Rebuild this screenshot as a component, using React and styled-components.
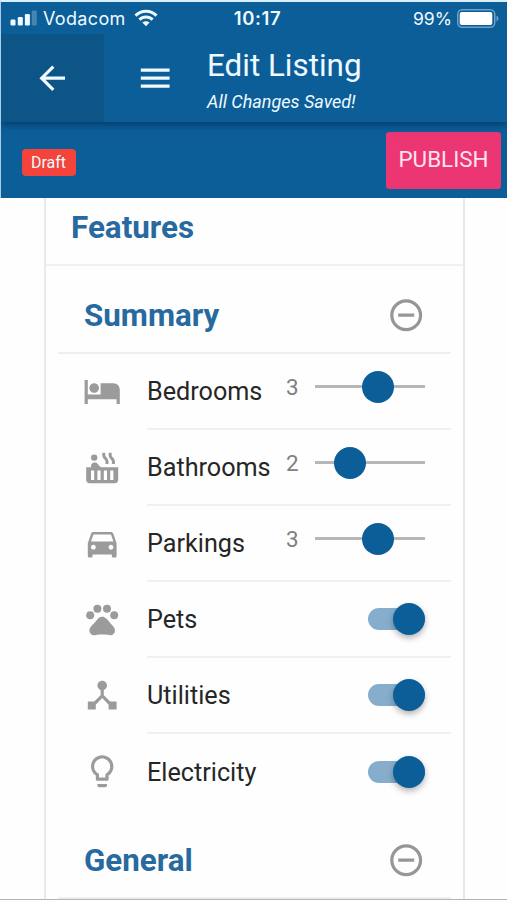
import React from "react";
import styled, { createGlobalStyle } from "styled-components";
import {
  MdArrowBack,
  MdMenu,
  MdHotel,
  MdHotTub,
  MdDirectionsCar,
  MdPets,
  MdDeviceHub,
  MdLightbulbOutline,
  MdRemoveCircleOutline,
} from "react-icons/md";

const GlobalStyle = createGlobalStyle`
  *, *::before, *::after { box-sizing: border-box; }
  html, body { margin: 0; height: 900px; overflow: hidden; background: #fefefe; }
  body { font-family: Roboto, "Liberation Sans", sans-serif; }
`;

const Screen = styled.div`
  display: flex;
  flex-direction: column;
  width: 507px;
  height: 900px;
  overflow: hidden;
  border-bottom: 1px solid #b4b4b4;
  color: #262626;
`;

const Header = styled.header`
  flex: none;
  height: 198px;
  border-top: 2px solid #d9effa;
  border-left: 1px solid #a9cde6;
  background: #0c5e99;
  color: #eefaff;
`;

const StatusBar = styled.div`
  display: grid;
  grid-template-columns: 1fr auto 1fr;
  align-items: center;
  height: 32px;
  padding: 0 8px 0 9px;
  font-family: Inter, "Liberation Sans", sans-serif;
`;

const StatusGroup = styled.div`
  display: flex;
  align-items: center;
  justify-content: ${(p) => (p.$end ? "flex-end" : "flex-start")};
`;

const Carrier = styled.span`
  margin: 0 8px 0 6px;
  font-size: 18px;
  letter-spacing: 0.35px;
`;

const Clock = styled.span`
  padding-left: 6px;
  font-weight: 600;
  font-size: 18.5px;
  letter-spacing: 0.6px;
`;

const Charge = styled.span`
  margin-right: 5px;
  font-size: 17.6px;
`;

const AppBar = styled.div`
  position: relative;
  display: flex;
  height: 88px;
  box-shadow: 0 2px 8px rgba(0, 25, 60, 0.6);
  clip-path: inset(0 0 -12px 0);
`;

const BackButton = styled.button`
  display: flex;
  align-items: center;
  justify-content: center;
  width: 103px;
  padding: 0;
  border: 0;
  background: #0d5487;
  color: inherit;
  font-size: 38.4px;
`;

const MenuButton = styled(BackButton)`
  width: 103px;
  background: none;
`;

const Titles = styled.div`
  padding-top: 12px;
  white-space: nowrap;
`;

const Title = styled.h1`
  margin: 0;
  font-size: 31.4px;
  font-weight: 400;
  line-height: 40px;
`;

const SaveState = styled.div`
  margin-top: 5px;
  font-size: 18px;
  font-style: italic;
  line-height: 22px;
`;

const ActionBar = styled.div`
  display: flex;
  align-items: center;
  justify-content: space-between;
  height: 76px;
  padding: 0 6px 0 20.5px;
`;

const Tag = styled.span`
  display: flex;
  align-items: center;
  justify-content: center;
  width: 54px;
  height: 27px;
  margin-top: 4px;
  border-radius: 4px;
  background: #f4433b;
  font-size: 16px;
`;

const Publish = styled.button`
  width: 115px;
  height: 57px;
  padding: 0 0 2px;
  border: 0;
  border-radius: 3px;
  background: #ec3573;
  color: #ffe2ee;
  font: 400 22.4px Roboto, sans-serif;
`;

const Card = styled.main`
  flex: 1;
  min-height: 0;
  margin: 0 42px 0 44px;
  overflow: hidden;
  border: solid #e9e9e9;
  border-width: 0 2px;
`;

const CardTitle = styled.h2`
  height: 68px;
  margin: 0;
  padding: 10px 0 0 25px;
  border-bottom: 2px solid #f0f0f0;
  color: #2869a0;
  font-size: 31.4px;
  font-weight: 700;
  line-height: 40px;
`;

const SectionHeader = styled.div`
  display: flex;
  align-items: center;
  justify-content: space-between;
  height: 88px;
  margin: 0 12px;
  padding: 14px 26px 0 26px;
  border-bottom: 2px solid #efefef;
  color: #969696;
  font-size: 38.4px;

  svg { margin-bottom: 1px; }
`;

const SectionTitle = styled.h3`
  margin: 0;
  color: #2869a0;
  font-size: 31.3px;
  font-weight: 700;
  line-height: 40px;
`;

const Row = styled.div`
  display: flex;
  height: ${(p) => (p.$last ? 77 : 76)}px;
  padding: 0 12px 0 37px;
`;

const RowIcon = styled.div`
  display: flex;
  align-items: center;
  width: 64px;
  padding-bottom: 2px;
  color: #9b9b9b;
  font-size: 38.4px;
`;

const RowBody = styled.div`
  display: flex;
  flex: 1;
  align-items: center;
  justify-content: space-between;
  padding-right: 26px;
  border-bottom: 2px solid ${(p) => (p.$last ? "transparent" : "#f0f0f0")};
`;

const Label = styled.span`
  padding-top: 2px;
  font-size: 25.2px;
  line-height: 32px;
`;

const SliderGroup = styled.div`
  display: flex;
  align-items: center;
  height: 32px;
  margin-bottom: 9px;
`;

const Value = styled.span`
  width: 29px;
  color: #808080;
  font-size: 22.4px;
`;

const Track = styled.div`
  position: relative;
  width: 110px;
  height: 3px;
  background: #b7b7b7;
`;

const Thumb = styled.div`
  position: absolute;
  top: -14.5px;
  width: 32px;
  height: 32px;
  margin-left: -16px;
  border-radius: 50%;
  background: #0c5e99;
`;

const Switch = styled.div`
  display: flex;
  align-items: center;
  justify-content: flex-end;
  width: 57px;
  height: 22px;
  border-radius: 11px;
  background: #86aecc;
`;

const Knob = styled.div`
  width: 32px;
  height: 32px;
  border-radius: 50%;
  background: #0c5e99;
  box-shadow: 0 3px 6px rgba(0, 0, 0, 0.3);
`;

const rows = [
  { label: "Bedrooms", icon: MdHotel, value: 3, position: 57 },
  { label: "Bathrooms", icon: MdHotTub, value: 2, position: 32 },
  { label: "Parkings", icon: MdDirectionsCar, value: 3, position: 57 },
  { label: "Pets", icon: MdPets },
  { label: "Utilities", icon: MdDeviceHub },
  { label: "Electricity", icon: MdLightbulbOutline },
];

function Signal() {
  return (
    <svg width="27" height="16" viewBox="0 0 27 16" fill="#eefaff">
      <rect x="0.5" y="9.5" width="5" height="6" rx="1.2" />
      <rect x="7.8" y="7" width="5" height="8.5" rx="1.2" />
      <rect x="14.9" y="4" width="5" height="11.5" rx="1.2" />
      <rect x="21.8" y="0.5" width="5" height="15" rx="1.2" opacity="0.25" />
    </svg>
  );
}

function Wifi() {
  return (
    <svg width="24" height="18" viewBox="0 0 24 18" fill="none" stroke="#eefaff" strokeWidth="3">
      <path d="M1.5 6.6a15 15 0 0 1 21 0" />
      <path d="M5.4 10.6a9.4 9.4 0 0 1 13.2 0" />
      <path d="M12 17.2l-3.6-3.6a5.2 5.2 0 0 1 7.2 0z" fill="#eefaff" stroke="none" />
    </svg>
  );
}

function Battery() {
  return (
    <svg width="42" height="19" viewBox="0 0 42 19">
      <rect x="0.75" y="0.75" width="37" height="17.5" rx="4.5" fill="none" stroke="#6ea0c8" strokeWidth="1.5" />
      <rect x="2.7" y="3" width="32.6" height="13" rx="2" fill="#fff" />
      <path d="M39.5 6.5q2 1 2 3t-2 3z" fill="#6ea0c8" />
    </svg>
  );
}

function Slider({ value, position }) {
  return (
    <SliderGroup>
      <Value>{value}</Value>
      <Track>
        <Thumb style={{ left: `${position}%` }} />
      </Track>
    </SliderGroup>
  );
}

function Section({ title }) {
  return (
    <SectionHeader>
      <SectionTitle>{title}</SectionTitle>
      <MdRemoveCircleOutline />
    </SectionHeader>
  );
}

export default function App() {
  return (
    <Screen>
      <GlobalStyle />
      <Header>
        <StatusBar>
          <StatusGroup>
            <Signal />
            <Carrier>Vodacom</Carrier>
            <Wifi />
          </StatusGroup>
          <Clock>10:17</Clock>
          <StatusGroup $end>
            <Charge>99%</Charge>
            <Battery />
          </StatusGroup>
        </StatusBar>
        <AppBar>
          <BackButton aria-label="Back">
            <MdArrowBack />
          </BackButton>
          <MenuButton aria-label="Menu">
            <MdMenu />
          </MenuButton>
          <Titles>
            <Title>Edit Listing</Title>
            <SaveState>All Changes Saved!</SaveState>
          </Titles>
        </AppBar>
        <ActionBar>
          <Tag>Draft</Tag>
          <Publish>PUBLISH</Publish>
        </ActionBar>
      </Header>
      <Card>
        <CardTitle>Features</CardTitle>
        <Section title="Summary" />
        {rows.map(({ label, icon: Icon, value, position }, i) => {
          const last = i === rows.length - 1;
          return (
            <Row key={label} $last={last}>
              <RowIcon>
                <Icon />
              </RowIcon>
              <RowBody $last={last}>
                <Label>{label}</Label>
                {value ? (
                  <Slider value={value} position={position} />
                ) : (
                  <Switch>
                    <Knob />
                  </Switch>
                )}
              </RowBody>
            </Row>
          );
        })}
        <Section title="General" />
      </Card>
    </Screen>
  );
}
